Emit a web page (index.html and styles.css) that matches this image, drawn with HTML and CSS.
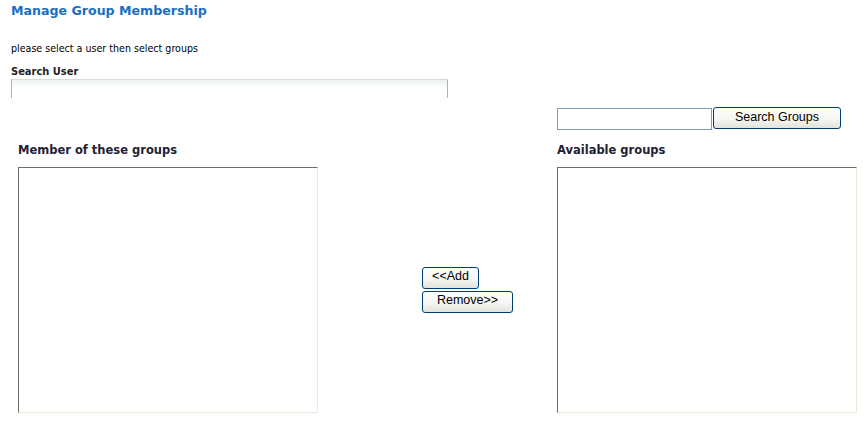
FILE: index.html
```html
<!DOCTYPE html>
<html>
<head>
<meta charset="utf-8">
<link rel="stylesheet" href="styles.css">
</head>
<body>
<div class="page">
  <h1 class="title">Manage Group Membership</h1>
  <p class="hint">please select a user then select groups</p>
  <div class="user-search">
    <label class="field-label">Search User</label>
    <input class="user-input" type="text">
  </div>
  <div class="groups">
    <div class="cell"></div>
    <div class="cell"></div>
    <div class="group-search">
      <input class="group-input" type="text">
      <button class="btn btn-search">Search Groups</button>
    </div>
    <div class="col-label">Member of these groups</div>
    <div class="cell"></div>
    <div class="col-label">Available groups</div>
    <div class="listbox"></div>
    <div class="actions">
      <button class="btn btn-add">&lt;&lt;Add</button>
      <button class="btn btn-remove">Remove&gt;&gt;</button>
    </div>
    <div class="listbox"></div>
  </div>
</div>
</body>
</html>
```

FILE: styles.css
```css
html, body {
  margin: 0;
  padding: 0;
  background: #ffffff;
}
.page {
  padding: 3px 0 0 11px;
  font-family: "DejaVu Sans Condensed", "DejaVu Sans", sans-serif;
  color: #000;
}
.title {
  margin: 0;
  font-family: "DejaVu Sans", sans-serif;
  font-size: 12.6px;
  font-weight: bold;
  color: #1b6fc1;
  line-height: 16px;
}
.hint {
  margin: 22px 0 0 0;
  font-size: 10.6px;
  line-height: 14px;
}
.user-search {
  margin-top: 10px;
  display: flex;
  flex-direction: column;
}
.field-label {
  font-size: 11px;
  font-weight: bold;
  color: #222;
  line-height: 14px;
}
.user-input {
  box-sizing: border-box;
  width: 437px;
  height: 19px;
  margin: 0;
  padding: 0;
  border: none;
  border-top: 1px solid #d6dcdc;
  border-left: 1px solid #b0b0b0;
  border-right: 1px solid #b4afc2;
  background: linear-gradient(#eef1f1, #ffffff 8px);
}
.groups {
  display: grid;
  grid-template-columns: 300px 239px 300px;
  grid-template-rows: auto auto 246px;
  margin: 9px 0 0 7px;
}
.group-search {
  display: flex;
  align-items: flex-start;
  gap: 1px;
}
.group-input {
  box-sizing: border-box;
  width: 155px;
  height: 22px;
  margin: 1px 0 0 0;
  padding: 0;
  border: 1px solid #7f9db9;
  background: #fff;
}
.btn {
  box-sizing: border-box;
  height: 22px;
  margin: 0;
  padding: 0 0 3px 0;
  border: 1px solid #003c74;
  border-radius: 3px;
  background: linear-gradient(#ffffff, #f4f4f0 60%, #e3e3db);
  font-family: "Liberation Sans", Arial, sans-serif;
  font-size: 12.5px;
  color: #000;
  line-height: 16px;
}
.btn-search {
  width: 128px;
}
.col-label {
  margin-top: 13px;
  height: 24px;
  font-family: "DejaVu Sans", sans-serif;
  font-size: 11.5px;
  font-weight: bold;
  color: #222233;
  line-height: 14px;
}
.listbox {
  box-sizing: border-box;
  width: 300px;
  height: 246px;
  border-top: 1px solid #716f64;
  border-left: 1px solid #716f64;
  border-right: 1px solid #ece9d8;
  border-bottom: 1px solid #ece9d8;
  background: #fff;
}
.actions {
  display: flex;
  flex-direction: column;
  align-items: flex-start;
  justify-content: center;
  gap: 2px;
  padding-left: 104px;
  padding-bottom: 1px;
}
.btn-add {
  width: 57px;
}
.btn-remove {
  width: 91px;
}
```
